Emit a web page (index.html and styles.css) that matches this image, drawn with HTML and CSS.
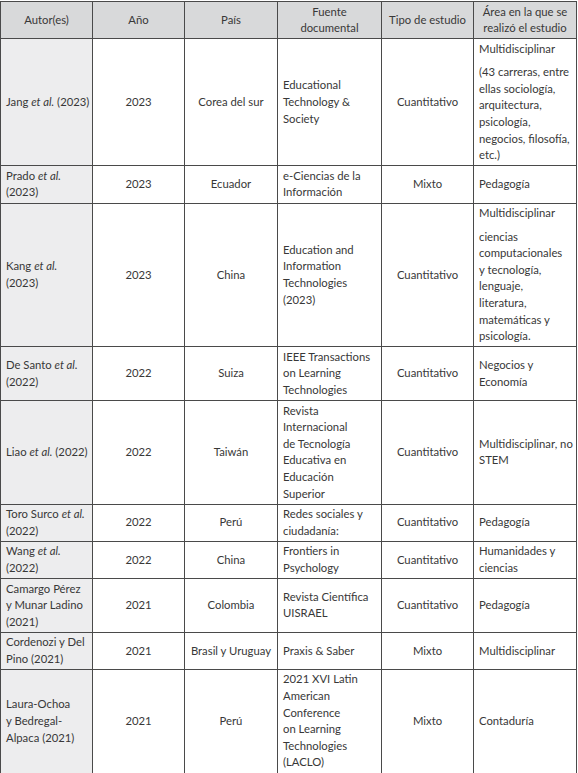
FILE: index.html
```html
<!DOCTYPE html>
<html lang="es">
<head>
    <meta charset="UTF-8">
    <meta name="viewport" content="width=device-width, initial-scale=1">
    <title>Estudios revisados</title>
    <link rel="stylesheet" href="styles.css">
</head>
<body>
    <table class="studies">
        <colgroup>
            <col class="c-author">
            <col class="c-year">
            <col class="c-country">
            <col class="c-source">
            <col class="c-type">
            <col class="c-area">
        </colgroup>
        <thead>
            <tr>
                <th>Autor(es)</th>
                <th>Año</th>
                <th>País</th>
                <th>Fuente<br>documental</th>
                <th>Tipo de estudio</th>
                <th>Área en la que se<br>realizó el estudio</th>
            </tr>
        </thead>
        <tbody>
            <tr>
                <td class="author">Jang <em>et al.</em> (2023)</td>
                <td class="mid">2023</td>
                <td class="mid">Corea del sur</td>
                <td>Educational<br>Technology &amp;<br>Society</td>
                <td class="mid">Cuantitativo</td>
                <td><p>Multidisciplinar</p><p>(43 carreras, entre<br>ellas sociología,<br>arquitectura,<br>psicología,<br>negocios, filosofía,<br>etc.)</p></td>
            </tr>
            <tr>
                <td class="author">Prado <em>et al.</em><br>(2023)</td>
                <td class="mid">2023</td>
                <td class="mid">Ecuador</td>
                <td>e-Ciencias de la<br>Información</td>
                <td class="mid">Mixto</td>
                <td>Pedagogía</td>
            </tr>
            <tr>
                <td class="author">Kang <em>et al.</em><br>(2023)</td>
                <td class="mid">2023</td>
                <td class="mid">China</td>
                <td>Education and<br>Information<br>Technologies<br>(2023)</td>
                <td class="mid">Cuantitativo</td>
                <td><p>Multidisciplinar</p><p>ciencias<br>computacionales<br>y tecnología,<br>lenguaje,<br>literatura,<br>matemáticas y<br>psicología.</p></td>
            </tr>
            <tr>
                <td class="author">De Santo <em>et al.</em><br>(2022)</td>
                <td class="mid">2022</td>
                <td class="mid">Suiza</td>
                <td>IEEE Transactions<br>on Learning<br>Technologies</td>
                <td class="mid">Cuantitativo</td>
                <td>Negocios y<br>Economía</td>
            </tr>
            <tr>
                <td class="author">Liao <em>et al.</em> (2022)</td>
                <td class="mid">2022</td>
                <td class="mid">Taiwán</td>
                <td>Revista<br>Internacional<br>de Tecnología<br>Educativa en<br>Educación<br>Superior</td>
                <td class="mid">Cuantitativo</td>
                <td>Multidisciplinar, no<br>STEM</td>
            </tr>
            <tr>
                <td class="author">Toro Surco <em>et al.</em><br>(2022)</td>
                <td class="mid">2022</td>
                <td class="mid">Perú</td>
                <td>Redes sociales y<br>ciudadanía:</td>
                <td class="mid">Cuantitativo</td>
                <td>Pedagogía</td>
            </tr>
            <tr>
                <td class="author">Wang <em>et al.</em><br>(2022)</td>
                <td class="mid">2022</td>
                <td class="mid">China</td>
                <td>Frontiers in<br>Psychology</td>
                <td class="mid">Cuantitativo</td>
                <td>Humanidades y<br>ciencias</td>
            </tr>
            <tr>
                <td class="author">Camargo Pérez<br>y Munar Ladino<br>(2021)</td>
                <td class="mid">2021</td>
                <td class="mid">Colombia</td>
                <td>Revista Científica<br>UISRAEL</td>
                <td class="mid">Cuantitativo</td>
                <td>Pedagogía</td>
            </tr>
            <tr>
                <td class="author">Cordenozi y Del<br>Pino (2021)</td>
                <td class="mid">2021</td>
                <td class="mid">Brasil y Uruguay</td>
                <td>Praxis &amp; Saber</td>
                <td class="mid">Mixto</td>
                <td>Multidisciplinar</td>
            </tr>
            <tr>
                <td class="author">Laura-Ochoa<br>y Bedregal-<br>Alpaca (2021)</td>
                <td class="mid">2021</td>
                <td class="mid">Perú</td>
                <td>2021 XVI Latin<br>American<br>Conference<br>on Learning<br>Technologies<br>(LACLO)</td>
                <td class="mid">Mixto</td>
                <td>Contaduría</td>
            </tr>
            <tr class="next">
                <td class="author"></td>
                <td></td>
                <td></td>
                <td></td>
                <td></td>
                <td></td>
            </tr>
        </tbody>
    </table>
</body>
</html>
```

FILE: styles.css
```css
body {
    margin: 0;
    padding: 1px 0 0 0;
    background-color: #ffffff;
    font-family: Lato, "Open Sans", "Liberation Sans", sans-serif;
    font-size: 11.3px;
    color: #383838;
}
.studies {
    border-collapse: collapse;
    table-layout: fixed;
    width: 576px;
}
.c-author { width: 92px; }
.c-year { width: 92px; }
.c-country { width: 93px; }
.c-source { width: 104px; }
.c-type { width: 92px; }
.c-area { width: 103px; }
.studies th,
.studies td {
    border: 1px solid #4a4a4a;
    padding: 1.5px 1px 1.5px 5px;
    line-height: 16.6px;
    vertical-align: middle;
    text-align: left;
    white-space: nowrap;
}
.studies th {
    background-color: #d8d9da;
    font-weight: normal;
    text-align: center;
    padding-left: 1px;
}
.studies td.author {
    background-color: #ededee;
}
.studies td.mid {
    text-align: center;
    padding-left: 1px;
}
.studies p {
    margin: 0;
}
.studies p + p {
    margin-top: 7px;
}
.next td {
    height: 40px;
}
```
